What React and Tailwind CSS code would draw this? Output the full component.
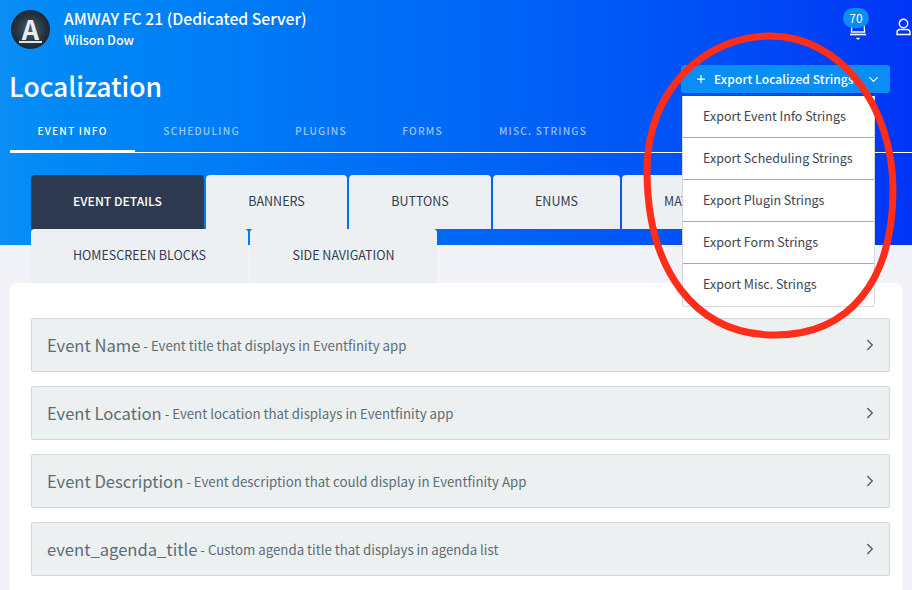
import React from 'react'
import { ChevronDown, ChevronRight, Plus } from 'lucide-react'

const navTabs = [
  { label: 'EVENT INFO', w: 'w-[125px]', active: true },
  { label: 'SCHEDULING', w: 'w-[133px]' },
  { label: 'PLUGINS', w: 'w-[106px]' },
  { label: 'FORMS', w: 'w-[97px]' },
  { label: 'MISC. STRINGS', w: 'w-[144px]' },
]

const subTabs = [
  { label: 'EVENT DETAILS', w: 'w-[173px]', active: true },
  { label: 'BANNERS', w: 'w-[141px]' },
  { label: 'BUTTONS', w: 'w-[142px]' },
  { label: 'ENUMS', w: 'w-[127px]' },
  { label: 'MATCHES', w: 'w-[140px]' },
  { label: 'HOMESCREEN BLOCKS', w: 'w-[217px]' },
  { label: 'SIDE NAVIGATION', w: 'w-[187px]' },
]

const exportItems = [
  'Export Event Info Strings',
  'Export Scheduling Strings',
  'Export Plugin Strings',
  'Export Form Strings',
  'Export Misc. Strings',
]

const rows = [
  { title: 'Event Name', text: 'Event title that displays in Eventfinity app' },
  { title: 'Event Location', text: 'Event location that displays in Eventfinity app' },
  { title: 'Event Description', text: 'Event description that could display in Eventfinity App' },
  { title: 'event_agenda_title', text: 'Custom agenda title that displays in agenda list' },
]

const App = () => {
  return (
    <div className="relative h-[590px] w-[912px] overflow-hidden bg-[#f2f3f8] font-['Noto_Sans_CJK_SC',sans-serif]">
      <div className="h-[245px] bg-gradient-to-r from-[#0a8ef5] to-[#0034f5]">
        <div className="flex h-[65px] items-start pl-[11px] pt-[10px]">
          <div className="flex h-[39px] w-[39px] items-center justify-center rounded-full bg-[radial-gradient(circle,#4a5a68_0%,#17242f_75%)]">
            <span className="border-b-2 border-[#dfe6ea] px-[3px] text-[27px] font-bold leading-[24px] text-[#e8edf0]">A</span>
          </div>
          <div className="ml-[14px] text-white">
            <div className="text-[15.75px] font-medium leading-[18px]">AMWAY FC 21 (Dedicated Server)</div>
            <div className="mt-[4px] text-[12.6px] font-medium leading-[16px]">Wilson Dow</div>
          </div>
          <div className="relative ml-auto mr-[43px] h-[32px] w-[26px]">
            <svg className="absolute left-[5px] top-[11px]" width="20" height="20" viewBox="0 0 20 20" fill="none" stroke="white" strokeWidth="1.3">
              <path d="M4 2 L3.4 11 H16.6 L16 2" />
              <path d="M2 13.5 H18" strokeWidth="1.6" />
              <path d="M8.5 17 L10 18 L11.5 17" strokeWidth="1.4" />
            </svg>
            <span className="absolute left-0 top-[-2px] flex h-[20px] w-[26px] items-center justify-center rounded-full bg-[#0a8ef5] text-[12px] leading-none text-white">70</span>
          </div>
          <svg className="absolute left-[896px] top-[18px]" width="15" height="18" viewBox="0 0 15 18" fill="none" stroke="white" strokeWidth="1.4">
            <circle cx="7.5" cy="5.5" r="4.2" />
            <path d="M1 16.5 V14.5 Q1 11.5 4 11.5 H11 Q14 11.5 14 14.5 V16.5 Z" />
          </svg>
        </div>

        <div className="flex h-[54px] items-start justify-between pl-[9px] pr-[22px]">
          <h1 className="mt-[3px] text-[26.5px] font-medium leading-[36px] text-white">Localization</h1>
          <div className="flex h-[28px] w-[209px] items-center rounded-[3px] bg-[#0a8ef5] pl-[14px] text-white">
            <Plus size={12} strokeWidth={2.5} />
            <span className="ml-[7px] whitespace-nowrap text-[12px] font-medium leading-none tracking-[0.1px]">Export Localized Strings</span>
            <ChevronDown size={15} className="ml-auto mr-[9px]" />
          </div>
        </div>

        <div className="ml-[10px] flex h-[34px] border-b border-white">
          {navTabs.map((tab) => (
            <div
              key={tab.label}
              className={`${tab.w} h-[34px] pt-[5px] text-center text-[10.2px] font-medium leading-[14px] tracking-[1.2px] ${tab.active ? 'border-b-[3px] border-white text-white' : 'text-white/60'}`}
            >
              {tab.label}
            </div>
          ))}
        </div>

        <div className="mt-[22px] flex flex-wrap gap-x-[2px] pl-[31px]">
          {subTabs.map((tab) => (
            <div
              key={tab.label}
              className={`${tab.w} flex h-[54px] items-center justify-center rounded-t-[4px] pb-[2px] leading-none ${tab.active ? 'bg-[#2d3a50] text-[12.2px] font-medium text-white' : 'bg-[#edf0f2] text-[12.5px] text-[#333c50]'}`}
            >
              {tab.label}
            </div>
          ))}
        </div>
      </div>

      <div className="relative mx-[10px] mt-[38px] h-[320px] rounded-t-[6px] bg-white pl-[21px] pr-[12px] pt-[35px]">
        <div className="flex flex-col gap-[14px]">
          {rows.map((row) => (
            <div key={row.title} className="flex h-[54px] items-center rounded-[2px] border border-[#cfd8dc] bg-[#ecf0f1] pl-[15px] pr-[10px] text-[#5d6d75]">
              <span className="text-[16.6px] leading-[24px]">{row.title}</span>
              <span className="ml-[3px] pt-[1px] text-[13.25px] leading-[24px]">- {row.text}</span>
              <ChevronRight size={18} className="ml-auto text-[#54646c]" />
            </div>
          ))}
        </div>
      </div>

      <div className="absolute left-[682px] top-[96px] w-[193px] rounded-b-[3px] border border-t-0 border-[#d5d9de] bg-white">
        {exportItems.map((item, i) => (
          <div
            key={item}
            className={`flex h-[42px] items-center pb-[1px] pl-[20px] text-[12.5px] leading-none text-[#3d4452] ${i < exportItems.length - 1 ? 'border-b border-[#a3a9b5]' : ''}`}
          >
            {item}
          </div>
        ))}
      </div>

      <svg className="pointer-events-none absolute left-0 top-0" width="912" height="590" fill="none">
        <path
          d="M770 36 C840 36 893 105 893 190 C893 280 850 335 775 335 C695 335 647 270 647 170 C647 90 705 36 770 36 Z"
          stroke="#ff2d1a"
          strokeWidth="7"
        />
      </svg>
    </div>
  )
}

export default App
